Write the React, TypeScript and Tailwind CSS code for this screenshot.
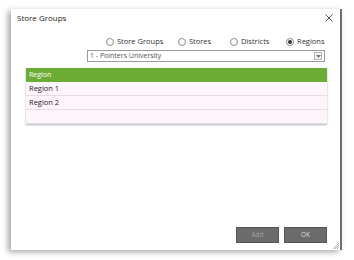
import React from 'react'

const FONT = { fontFamily: '"Open Sans", "Noto Sans", sans-serif' }

function Radio({ label, checked, w }: { label: string; checked?: boolean; w: string }) {
  return (
    <div className={`flex items-center gap-[3px] ${w}`}>
      <span className="w-[8px] h-[8px] rounded-full border border-[#8a8a8a] bg-white flex items-center justify-center">
        {checked && <span className="w-[4px] h-[4px] rounded-full bg-[#333]" />}
      </span>
      <span className="text-[7.5px] text-[#333]">{label}</span>
    </div>
  )
}

export default function App() {
  const rows = ['Region 1', 'Region 2', '']
  return (
    <div className="w-[354px] h-[260px] bg-white pt-[9px] pl-[11px]" style={FONT}>
      <div className="relative w-[331px] h-[241px] bg-white border-r-2 border-[#6f6f6f] shadow-[-3px_2px_6px_rgba(0,0,0,0.35)] flex flex-col">
        <div className="flex items-center justify-between pl-[6px] pr-[7px] pt-[1px] h-[16px]">
          <span className="text-[8px] text-[#222]">Store Groups</span>
          <svg width="8" height="8" viewBox="0 0 8 8">
            <path d="M0.5 0.5L7.5 7.5M7.5 0.5L0.5 7.5" stroke="#555" strokeWidth="1" />
          </svg>
        </div>
        <div className="flex ml-[95px] mt-[11px]">
          <Radio label="Store Groups" w="w-[72px]" />
          <Radio label="Stores" w="w-[52px]" />
          <Radio label="Districts" w="w-[56px]" />
          <Radio label="Regions" checked w="w-[40px]" />
        </div>
        <div className="ml-[76px] mt-[3px] w-[238px] h-[12px] border border-[#9a9a9a] flex items-center justify-between pl-[2px] pr-[2px]">
          <span className="text-[7px] text-[#555]">1 - Pointers University</span>
          <span className="w-[8px] h-[8px] border border-[#b5b5b5] bg-[#f4f4f4] flex items-center justify-center">
            <svg width="5" height="3" viewBox="0 0 5 3"><path d="M0 0L5 0L2.5 3Z" fill="#777" /></svg>
          </span>
        </div>
        <div className="ml-[15px] mt-[6px] w-[301px] shadow-[0_1px_2px_rgba(0,0,0,0.3)]">
          <div className="h-[14px] bg-[#6aac34] flex items-center pl-[3px] text-[7px] text-white">Region</div>
          {rows.map((r, i) => (
            <div key={i} className="h-[14px] bg-[#fdf5fb] border-b border-[#e5dde3] flex items-center pl-[3px] text-[7.5px] text-[#222]">
              {r}
            </div>
          ))}
        </div>
        <div className="flex-1" />
        <div className="flex justify-end gap-[5px] pr-[13px] pb-[7px]">
          <div className="w-[43px] h-[16px] bg-[#6b6b6b] border border-[#555] flex items-center justify-center text-[6.5px] text-[#a5a5a5]">Add</div>
          <div className="w-[43px] h-[16px] bg-[#6b6b6b] border border-[#555] flex items-center justify-center text-[6.5px] text-[#dcdcdc]">OK</div>
        </div>
        <svg className="absolute right-[0px] bottom-[0px]" width="8" height="8" viewBox="0 0 8 8">
          <path d="M7 1L1 7M7 3L3 7M7 5L5 7" stroke="#999" strokeWidth="0.8" />
        </svg>
      </div>
    </div>
  )
}
